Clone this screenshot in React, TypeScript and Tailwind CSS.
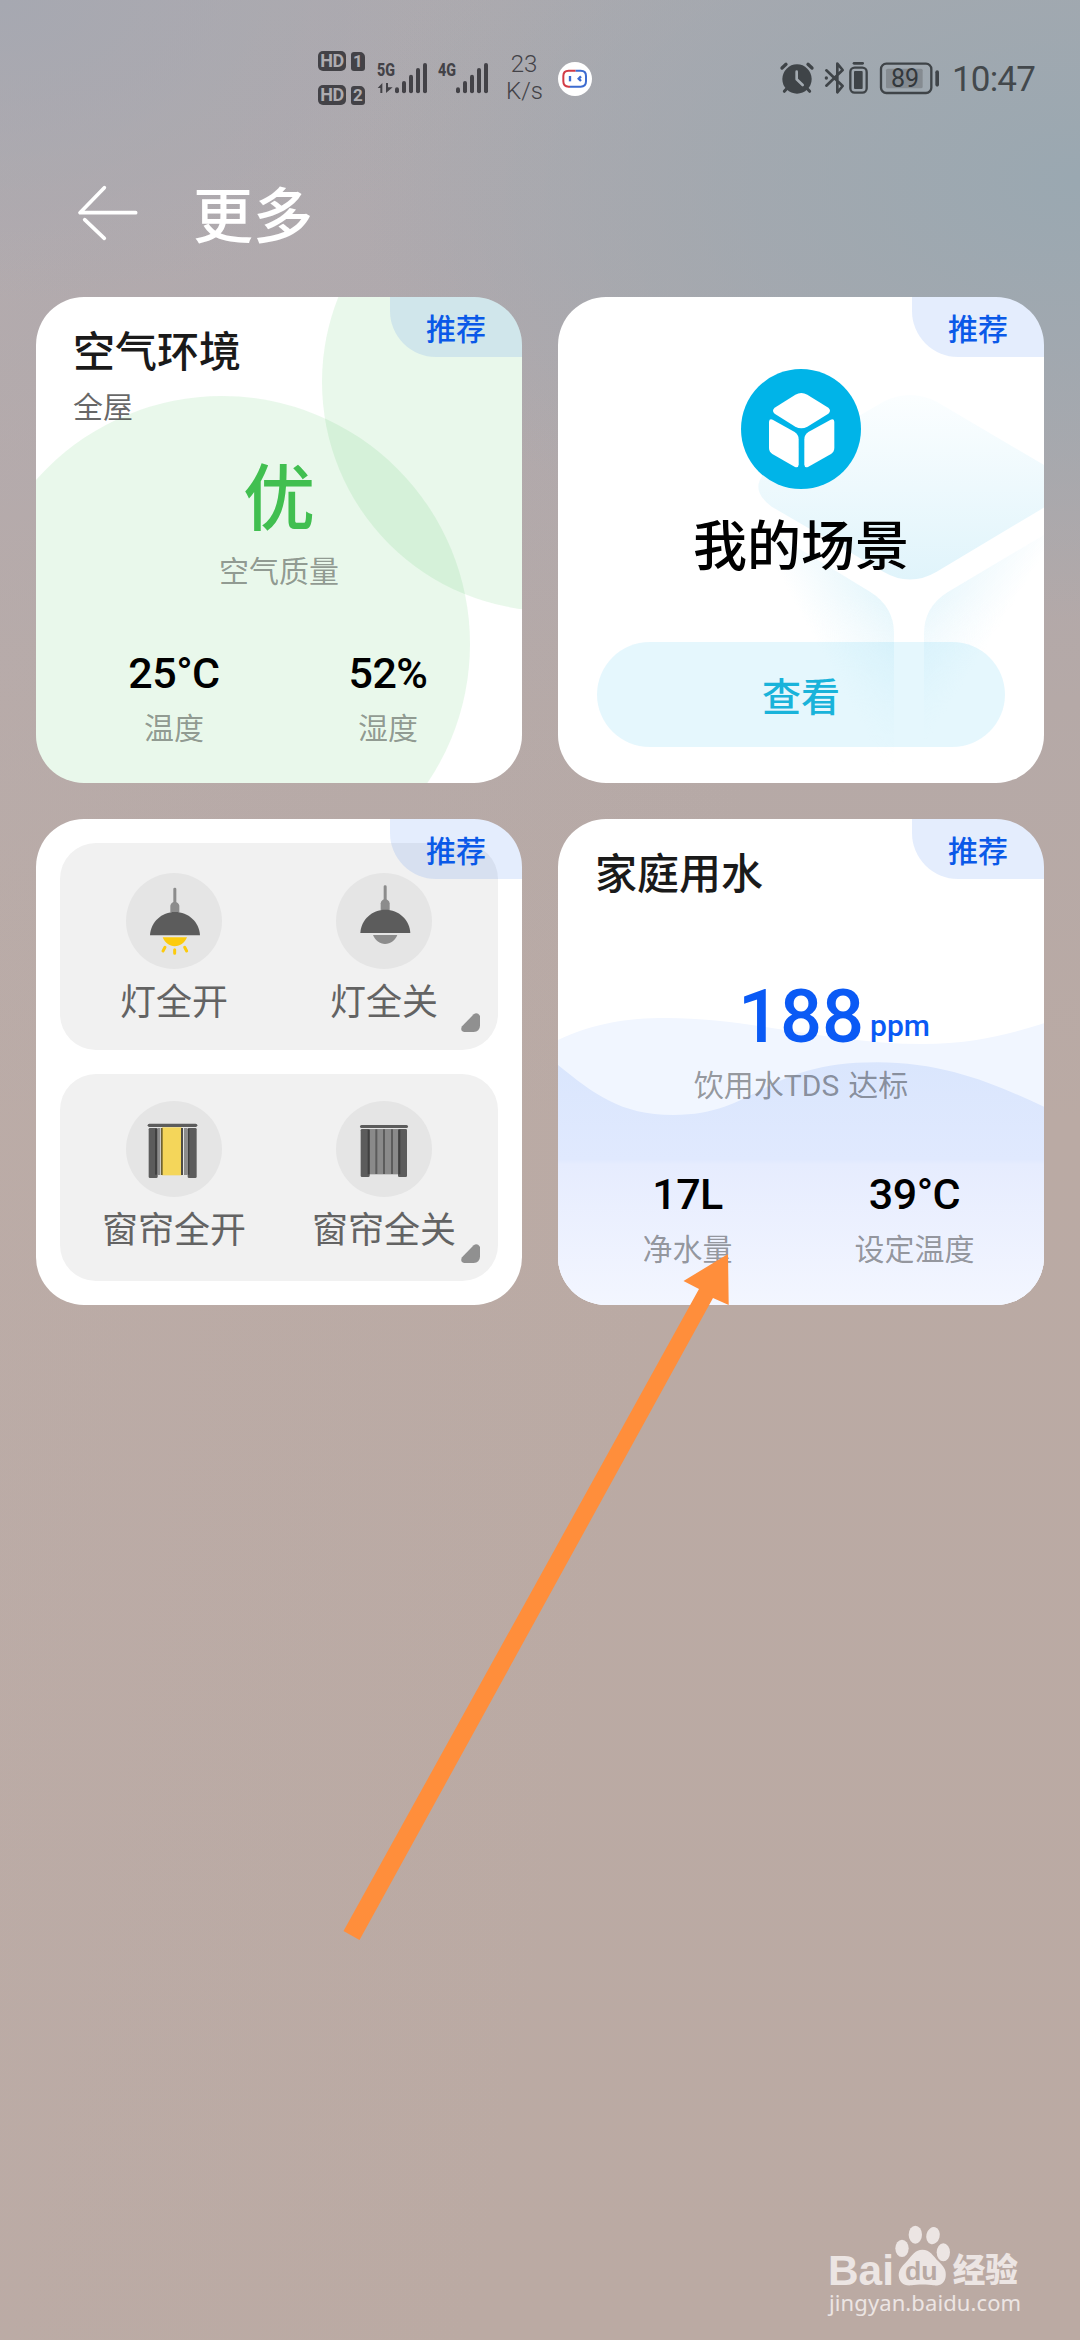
import type { ReactNode } from "react";

const CJK = "font-['Noto_Sans_CJK_SC',sans-serif]";

function HdBadge({ sim }: { sim: string }) {
  return (
    <div className="flex h-5 items-center gap-[5px] font-['Roboto',sans-serif] font-bold text-[#aeacb0]">
      <span className="flex h-5 w-7 items-center justify-center rounded-[5px] bg-[#434247] text-[18px] leading-none tracking-[-0.5px]">
        HD
      </span>
      <span className="flex h-[19px] w-[14px] items-center justify-center rounded-[3px] rounded-tr-[5px] bg-[#434247] text-[17px] leading-none">
        {sim}
      </span>
    </div>
  );
}

function Signal({ label, data }: { label: string; data?: boolean }) {
  const tops = [172, 153, 134, 114, 99];
  return (
    <svg className="overflow-visible" width="54" height="40" viewBox="228 84 162 120" fill="#434247">
      <text x="231" y="139" fontFamily="Roboto, sans-serif" fontWeight="800" fontSize="56" textLength="54" lengthAdjust="spacingAndGlyphs">
        {label}
      </text>
      {data && (
        <>
          <path d="M233 174 L247 159 V189 H241 V174Z" />
          <path d="M258 159 H264 V172 H278 L258 189Z" />
        </>
      )}
      {tops.map((t, i) => (
        <rect key={t} x={285 + i * 21} y={t} width="12" height={190 - t} rx="6" />
      ))}
    </svg>
  );
}

function AssistantIcon() {
  return (
    <svg width="34" height="34" viewBox="0 0 102 102" fill="none">
      <circle cx="51" cy="51" r="51" fill="#fff" />
      <path d="M53 26 H32 Q16 26 16 42 V58 Q16 74 32 74 H36" stroke="#d23b45" strokeWidth="6" />
      <path d="M53 26 H68 Q84 26 84 42 V58 Q84 74 68 74 H36" stroke="#3d6cd0" strokeWidth="6" />
      <path d="M36 42 V58" stroke="#3d6cd0" strokeWidth="7" />
      <path d="M69 43 L62 50 L69 57" stroke="#3d6cd0" strokeWidth="7" />
    </svg>
  );
}

function StatusRight() {
  return (
    <svg className="overflow-visible" width="162" height="34" viewBox="60 63 486 102" fill="none" stroke="#3f4448">
      <circle cx="111" cy="117" r="44" fill="#3f4448" stroke="none" />
      <path d="M66 84 L78 73 M156 84 L144 73" strokeWidth="10" strokeLinecap="round" />
      <path d="M80 146 L73 154 M142 146 L149 154" strokeWidth="9" strokeLinecap="round" />
      <path d="M110 95 V118 L128 135" stroke="#a3aab1" strokeWidth="8" strokeLinecap="round" strokeLinejoin="round" />
      <path d="M199 91 L248 138 L232 157 V71 L248 90 L199 137" strokeWidth="8" strokeLinejoin="round" strokeLinecap="round" />
      <circle cx="199" cy="114" r="5" fill="#3f4448" stroke="none" />
      <path d="M282 70 H308" strokeWidth="8" strokeLinecap="round" />
      <rect x="271" y="83" width="49" height="75" rx="13" strokeWidth="7" />
      <rect x="282" y="93" width="26" height="54" rx="3" fill="#3f4448" stroke="none" />
      <rect x="363" y="71" width="151" height="88" rx="16" strokeWidth="7" />
      <rect x="378" y="86" width="110" height="59" rx="5" fill="#858b91" stroke="none" />
      <rect x="526" y="91" width="11" height="49" rx="5.5" fill="#3f4448" stroke="none" />
      <text x="435" y="142" textAnchor="middle" fill="#33383c" stroke="none" fontFamily="Roboto, sans-serif" fontSize="75">
        89
      </text>
    </svg>
  );
}

function StatusBar() {
  return (
    <div className="flex h-[156px] items-center pl-[318px] pr-[45px]">
      <div className="flex flex-col gap-[14px]">
        <HdBadge sim="1" />
        <HdBadge sim="2" />
      </div>
      <div className="ml-[11px] flex gap-[7px]">
        <Signal label="5G" data />
        <Signal label="4G" />
      </div>
      <div className="ml-[15px] w-[36px] text-center font-['Roboto',sans-serif] text-[24px] font-[350] leading-[27px] text-[#434247]">
        <div>23</div>
        <div className="whitespace-nowrap">K/s</div>
      </div>
      <div className="ml-[16px] mt-[2px]">
        <AssistantIcon />
      </div>
      <div className="ml-auto flex items-center gap-[10px]">
        <StatusRight />
        <span className="mt-[3px] flex w-[83px] justify-center whitespace-nowrap font-['Roboto',sans-serif] text-[35px] font-normal leading-[34px] tracking-[-0.8px] text-[#43484c]">
          10:47
        </span>
      </div>
    </div>
  );
}

function Card({ children, art }: { children: ReactNode; art?: ReactNode }) {
  return (
    <section className="relative h-[486px] w-[486px] overflow-hidden rounded-[48px] bg-white">
      {art}
      <div className="relative h-full">{children}</div>
      <div className="absolute right-0 top-0 flex h-[60px] w-[132px] items-center justify-center rounded-bl-[46px] bg-[#0a5af0]/11 text-[30px] font-medium leading-none text-[#0a59e8]">
        推荐
      </div>
    </section>
  );
}

function Metric({ value, label }: { value: string; label: string }) {
  return (
    <div className="flex flex-col items-center">
      <span className="mt-[2px] font-['Roboto',sans-serif] text-[43px] font-medium leading-[42px] tracking-[-0.5px] text-black">
        {value}
      </span>
      <span className="mt-[17px] text-[30px] leading-[30px] text-black/40">{label}</span>
    </div>
  );
}

function AirCard() {
  return (
    <Card
      art={
        <svg className="absolute inset-0" width="486" height="486" viewBox="36 297 486 486" fill="#3cc250" fillOpacity="0.115">
          <circle cx="222" cy="644" r="248" />
          <circle cx="551" cy="382" r="229" />
        </svg>
      }
    >
      <h2 className="pl-[37px] pt-[31px] text-[42px] font-medium leading-[42px] text-[#1a1a1a]">空气环境</h2>
      <p className="mt-[20px] pl-[37px] text-[30px] leading-[30px] text-black/60">全屋</p>
      <p className="mt-[37px] text-center text-[72px] font-medium leading-[72px] text-[#41bf50]">优</p>
      <p className="mt-[25px] text-center text-[30px] leading-[30px] text-black/40">空气质量</p>
      <div className="mt-[66px] grid grid-cols-2 pl-[31px] pr-[27px]">
        <Metric value="25°C" label="温度" />
        <Metric value="52%" label="湿度" />
      </div>
    </Card>
  );
}

function SceneArt() {
  return (
    <svg className="absolute inset-0" width="486" height="486" viewBox="24 21 1458 1458">
      <defs>
        <linearGradient id="faceTop" x1="0" y1="0" x2="0" y2="1">
          <stop offset="0" stopColor="#fbfeff" />
          <stop offset="1" stopColor="#e0f4fb" />
        </linearGradient>
        <linearGradient id="faceLeft" gradientUnits="userSpaceOnUse" x1="1050" y1="950" x2="810" y2="1080">
          <stop offset="0" stopColor="#e2f5fb" />
          <stop offset="1" stopColor="#e2f5fb" stopOpacity="0" />
        </linearGradient>
        <linearGradient id="faceRight" gradientUnits="userSpaceOnUse" x1="1100" y1="940" x2="1310" y2="1070">
          <stop offset="0" stopColor="#e6f6fc" />
          <stop offset="1" stopColor="#e6f6fc" stopOpacity="0" />
        </linearGradient>
        <linearGradient id="fadeDown" gradientUnits="userSpaceOnUse" x1="0" y1="920" x2="0" y2="1440">
          <stop offset="0" stopColor="#fff" />
          <stop offset="1" stopColor="#000" />
        </linearGradient>
        <mask id="fade" maskUnits="userSpaceOnUse" x="24" y="21" width="1458" height="1458">
          <rect x="24" y="21" width="1458" height="1458" fill="url(#fadeDown)" />
        </mask>
      </defs>
      <path d="M1000 335 Q1080 295 1160 335 L1490 530 Q1560 590 1490 648 L1160 845 Q1080 892 1000 845 L665 650 Q585 590 665 530 Z" fill="url(#faceTop)" />
      <g mask="url(#fade)">
        <path d="M640 710 L960 905 Q1032 950 1032 1030 V1460 L640 1300 Z" fill="url(#faceLeft)" />
        <path d="M1490 730 L1195 905 Q1122 950 1122 1030 V1460 L1490 1300 Z" fill="url(#faceRight)" />
      </g>
    </svg>
  );
}

function CubeIcon() {
  return (
    <svg width="120" height="120" viewBox="572 236 360 360">
      <circle cx="752" cy="416" r="180" fill="#00b4e8" />
      <g fill="#fff">
        <path d="M735 313 Q753 303 771 313 L834 352 Q844 361 834 370 L771 409 Q753 419 735 409 L673 370 Q663 361 673 352 Z" />
        <path d="M656 394 Q657 384 667 388 L733 425 Q745 433 745 447 V523 Q744 534 734 530 L666 491 Q656 484 656 473 Z" />
        <path d="M852 394 Q851 384 841 388 L774 425 Q762 433 762 447 V523 Q763 534 773 530 L842 491 Q852 484 852 473 Z" />
      </g>
    </svg>
  );
}

function SceneCard() {
  return (
    <Card art={<SceneArt />}>
      <div className="flex flex-col items-center pt-[72px]">
        <CubeIcon />
        <h2 className="mt-[27px] text-[54px] font-medium leading-[54px] text-black">我的场景</h2>
        <button className="mt-[72px] h-[105px] w-[408px] rounded-full bg-[#00aee8]/10 text-[39px] font-medium leading-none text-[#19b3da]">
          查看
        </button>
      </div>
    </Card>
  );
}

function LampIcon({ on }: { on: boolean }) {
  return (
    <svg width="96" height="96" viewBox="288 188 288 288">
      <g transform={on ? "translate(0 0)" : "translate(1 -7)"}>
        <rect x="430" y="232" width="9" height="50" rx="4" fill="#8c8c8c" />
        <path d="M421 306 V286 Q423 275 434 274 Q446 275 448 286 V306Z" fill="#8c8c8c" />
        <path d="M360 375 C362 335 395 305 435 305 C475 305 508 335 510 375Z" fill="#5c5c5c" />
        <path d="M398 381 H471 C464 397 451 408 434 408 C418 408 405 397 398 381Z" fill={on ? "#fccb0d" : "#8c8c8c"} />
        {on && (
          <path d="M405 411 L399 422 M434 418 V429 M464 411 L470 422" stroke="#fccb0d" strokeWidth="9" strokeLinecap="round" />
        )}
      </g>
    </svg>
  );
}

function CurtainIcon({ open }: { open: boolean }) {
  return open ? (
    <svg width="96" height="96" viewBox="288 123 288 288">
      <rect x="353" y="191" width="149" height="10" rx="5" fill="#5c5c5c" />
      <rect x="356" y="204" width="27" height="150" rx="4" fill="#5c5c5c" />
      <rect x="473" y="204" width="27" height="150" rx="4" fill="#5c5c5c" />
      <rect x="375" y="206" width="7" height="138" fill="#404040" />
      <rect x="473" y="206" width="5" height="138" fill="#404040" />
      <rect x="383" y="204" width="8" height="141" fill="#8c8c8c" />
      <rect x="462" y="204" width="10" height="141" fill="#8c8c8c" />
      <rect x="396" y="202" width="59" height="144" fill="#f4d65a" />
      <rect x="393" y="204" width="5" height="141" fill="#6e6230" />
      <rect x="453" y="204" width="6" height="141" fill="#4e4c45" />
    </svg>
  ) : (
    <svg width="96" height="96" viewBox="918 123 288 288">
      <rect x="990" y="195" width="144" height="9" rx="4.5" fill="#5c5c5c" />
      <rect x="1016" y="207" width="90" height="136" fill="#8a8a8a" />
      <path d="M1039 208 V342 M1062 208 V342 M1086 208 V342" stroke="#5c5c5c" strokeWidth="6" />
      <rect x="992" y="207" width="27" height="144" rx="4" fill="#5c5c5c" />
      <rect x="1104" y="207" width="27" height="144" rx="4" fill="#5c5c5c" />
      <rect x="1013" y="209" width="6" height="134" fill="#404040" />
      <rect x="1105" y="209" width="6" height="134" fill="#404040" />
    </svg>
  );
}

function ControlPanel({ items, className }: { items: { icon: ReactNode; label: string }[]; className: string }) {
  return (
    <div className={"relative grid h-[207px] grid-cols-2 rounded-[36px] bg-[#f1f1f1] px-[9px] " + className}>
      {items.map((item) => (
        <div key={item.label} className="flex flex-col items-center">
          <div className="h-24 w-24 rounded-full bg-[#e5e5e5]">{item.icon}</div>
          <span className="mt-[12px] whitespace-nowrap text-[36px] leading-[36px] text-[#636363]">{item.label}</span>
        </div>
      ))}
      <svg className="absolute bottom-[18px] right-[18px]" width="19" height="19" viewBox="0 0 57 57" fill="#909090">
        <path d="M38 4 Q48 -4 57 8 V38 Q56 56 38 57 H9 Q-4 54 3 40 Z" />
      </svg>
    </div>
  );
}

function ControlsCard() {
  return (
    <Card>
      <div className="flex flex-col gap-6 p-6">
        <ControlPanel
          className="pt-[30px]"
          items={[
            { icon: <LampIcon on />, label: "灯全开" },
            { icon: <LampIcon on={false} />, label: "灯全关" },
          ]}
        />
        <ControlPanel
          className="pt-[27px]"
          items={[
            { icon: <CurtainIcon open />, label: "窗帘全开" },
            { icon: <CurtainIcon open={false} />, label: "窗帘全关" },
          ]}
        />
      </div>
    </Card>
  );
}

function WaterCard() {
  return (
    <Card
      art={
        <svg className="absolute inset-0" width="486" height="486" viewBox="24 27 1458 1458">
          <defs>
            <linearGradient id="water" gradientUnits="userSpaceOnUse" x1="0" y1="757" x2="0" y2="1485">
              <stop offset="0" stopColor="#dae6fd" />
              <stop offset="0.4" stopColor="#e0e9fe" />
              <stop offset="0.42" stopColor="#e6ecfe" />
              <stop offset="1" stopColor="#f3f6ff" />
            </linearGradient>
          </defs>
          <path d="M24 690 C130 640 230 624 350 624 C600 624 850 702 1120 702 C1260 702 1370 675 1482 640 V1485 H24Z" fill="#f1f6ff" />
          <path d="M24 765 C130 850 210 915 370 915 C620 915 640 757 980 757 C1190 757 1340 825 1482 890 V1485 H24Z" fill="url(#water)" />
        </svg>
      }
    >
      <h2 className="pl-[37px] pt-[31px] text-[42px] font-medium leading-[42px] text-[#1a1a1a]">家庭用水</h2>
      <div className="mt-[89px] grid grid-cols-[1fr_auto_1fr] items-end font-['Roboto',sans-serif] font-medium text-[#0a5af5]">
        <span />
        <span className="text-[74px] leading-[72px]">188</span>
        <span className="mb-[12px] ml-[6px] text-[30px] leading-[30px]">ppm</span>
      </div>
      <p className="mt-[15px] flex items-baseline justify-center text-[30px] leading-[30px] text-black/40">
        饮用水<span className="mr-[9px] font-['Roboto',sans-serif] leading-none">TDS</span>达标
      </p>
      <div className="mt-[70px] grid grid-cols-2 px-[16px]">
        <Metric value="17L" label="净水量" />
        <Metric value="39°C" label="设定温度" />
      </div>
    </Card>
  );
}

function Watermark() {
  return (
    <div className="absolute left-[826px] top-[2222px] text-[#ece5e3]">
      <svg className="overflow-visible" width="200" height="66" viewBox="78 66 600 198" fill="currentColor">
        <text x="84" y="254" fontFamily="'Liberation Sans', sans-serif" fontWeight="700" fontSize="130" textLength="198" lengthAdjust="spacingAndGlyphs">
          Bai
        </text>
        <ellipse cx="306" cy="145" rx="20" ry="26" />
        <ellipse cx="346" cy="104" rx="20" ry="27" />
        <ellipse cx="399" cy="107" rx="20" ry="26" transform="rotate(15 399 107)" />
        <ellipse cx="430" cy="157" rx="20" ry="27" />
        <path d="M367 149 C390 149 400 168 415 184 C430 199 440 210 437 230 C434 252 418 258 400 256 C385 253 350 253 335 256 C312 259 297 248 296 226 C296 205 312 194 322 182 C336 166 346 149 367 149Z" />
        <text x="315" y="239" fontFamily="'Liberation Sans', sans-serif" fontWeight="700" fontSize="80" fill="#b8a9a3" textLength="98" lengthAdjust="spacingAndGlyphs">
          du
        </text>
        <text x="458" y="245" fontFamily="'Noto Sans CJK SC', sans-serif" fontWeight="900" fontSize="98">
          经验
        </text>
      </svg>
      <div className="mt-[1px] pl-[3px] font-['Noto_Sans',sans-serif] text-[22px] leading-[26px] tracking-[0.1px]">
        jingyan.baidu.com
      </div>
    </div>
  );
}

export default function App() {
  return (
    <main
      className={
        "relative h-[2340px] w-[1080px] overflow-hidden bg-[radial-gradient(ellipse_720px_440px_at_1080px_180px,#9aa8b1_0%,#9da8b0b0_45%,transparent_100%),radial-gradient(ellipse_500px_300px_at_0px_0px,#a6a8b1_0%,transparent_100%),linear-gradient(100deg,#bdafad60_0%,transparent_60%),linear-gradient(180deg,#aaa9af_0%,#ada8ad_14%,#b5a9a7_30%,#baaaa4_48%,#bbaaa3_100%)] " +
        CJK
      }
    >
      <StatusBar />
      <header className="flex h-[141px] items-start pl-[76px] pt-[26px]">
        <svg className="mt-[2px]" width="64" height="58" viewBox="138 72 192 174" fill="none" stroke="#fff" strokeWidth="11" strokeLinecap="round" strokeLinejoin="round">
          <path d="M223 83 L150 158 H317 M164 179 L223 235" />
        </svg>
        <h1 className="ml-[53px] text-[60px] font-medium leading-[60px] text-white">更多</h1>
      </header>
      <div className="grid grid-cols-[486px_486px] gap-9 px-9">
        <AirCard />
        <SceneCard />
        <ControlsCard />
        <WaterCard />
      </div>
      <svg className="absolute left-[340px] top-[1250px]" width="392" height="694" viewBox="340 1250 392 694" fill="#ff8e3b">
        <path d="M728 1254 L683.5 1281 L699 1289 L343.5 1931 L359.5 1940 L713 1298 L728.7 1305 Z" />
      </svg>
      <Watermark />
    </main>
  );
}
